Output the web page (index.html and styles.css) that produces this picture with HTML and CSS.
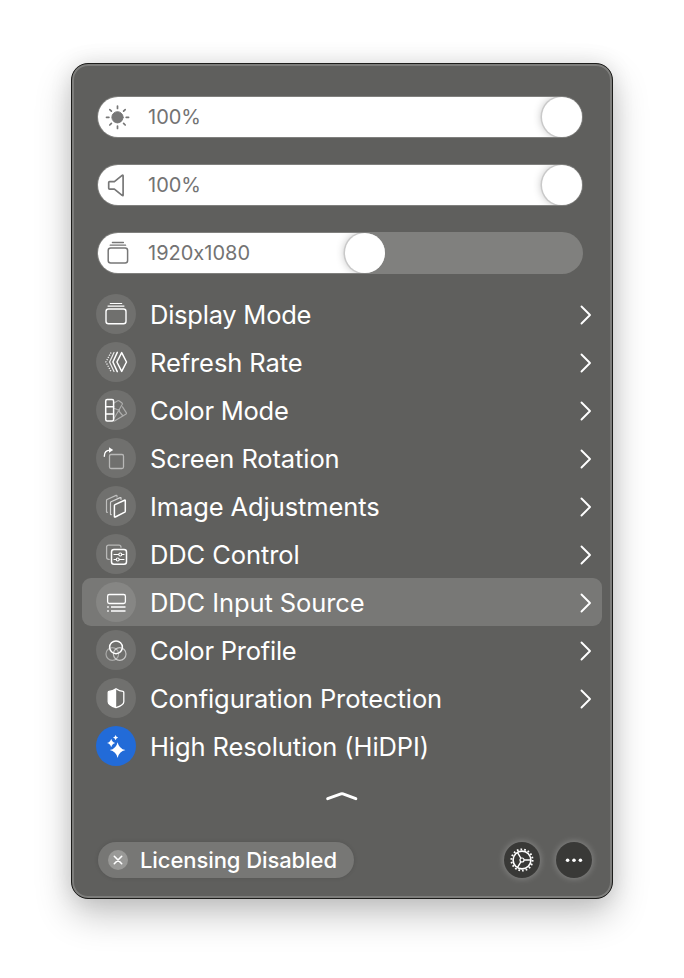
FILE: index.html
```html
<!DOCTYPE html>
<html lang="en">
<head>
<meta charset="utf-8">
<title>Display menu</title>
<link rel="stylesheet" href="styles.css">
</head>
<body>
<main class="panel">
  <section class="sliders">
    <div class="track"><div class="fill">
      <svg class="glyph" viewBox="0 0 40 40"><circle cx="19.5" cy="20.3" r="5.6" fill="currentColor"/><path d="M19.5 9.100v2.400M19.500 29v2.400M8.500 20.300h2.400M28.200 20.300h2.400M11.800 12.600l1.600 1.600M25.600 26.400l1.600 1.600M27.200 12.600l-1.600 1.600M13.400 26.400l-1.600 1.600" stroke-width="1.700"/></svg>
      <span class="value">100%</span><i class="knob"></i></div></div>
    <div class="track"><div class="fill">
      <svg class="glyph" viewBox="0 0 40 40"><path d="M11.600 16.600h4.800l7.700-6.200q1-.7 1 .5v19q0 1.200-1 .5l-7.700-6.200h-4.800q-.9 0-.9-.9v-5.800q0-.9.900-.9z" stroke-width="1.700"/></svg>
      <span class="value">100%</span><i class="knob"></i></div></div>
    <div class="track"><div class="fill partial">
      <svg class="glyph" viewBox="0 0 40 40"><rect x="10.200" y="15" width="19.400" height="15" rx="2.500" stroke-width="1.500"/><path d="M12.200 12.200h15.400M14.400 9.500h11" stroke-width="1.300"/></svg>
      <span class="value">1920x1080</span><i class="knob"></i></div></div>
  </section>

  <nav class="menu">
    <div class="row"><svg class="icon" viewBox="0 0 40 40"><rect x="10" y="15" width="20" height="14.700" rx="2.500" stroke-width="1.400"/><path d="M12 12.100h16M14.300 9.500h11.400" stroke-width="1.200"/></svg><span class="label tight">Display Mode</span><svg class="go" viewBox="0 0 12 20"><path d="M1.500 1.500 10 10l-8.500 8.500"/></svg></div>
    <div class="row"><svg class="icon" viewBox="0 0 40 40"><path d="M25.700 10.600 30.500 20l-4.800 9.400L20.900 20z" stroke-width="1.500"/><path d="M21.300 10.400 16.900 20l4.400 9.600" stroke-width="1.500"/><path d="M18 10.500 13.600 20l4.400 9.500" stroke-width="1.200" opacity=".85"/><path d="M15 10.500 9.900 20l5.100 9.500" stroke-width="1.400" stroke-dasharray="1.200 1.300" stroke-linecap="butt" opacity=".85"/></svg><span class="label">Refresh Rate</span><svg class="go" viewBox="0 0 12 20"><path d="M1.500 1.500 10 10l-8.500 8.500"/></svg></div>
    <div class="row"><svg class="icon" viewBox="0 0 40 40"><g opacity=".42" stroke-width="1.200"><path d="M18 13 21.800 10.800q.8-.4 1.500.1l2.700 2q.7.500.3 1.300L18 28.500M18 18.200l5.500 2.300M26.500 16.800l3.900 6q.4.700-.3 1.200L18.500 31M23.300 21.500l3.700 4.500"/></g><rect x="9.700" y="9.600" width="7.900" height="21.500" rx="1.500" stroke-width="1.500"/><path d="M9.700 16.700h7.900M9.700 24h7.900" stroke-width="1.400"/></svg><span class="label tight">Color Mode</span><svg class="go" viewBox="0 0 12 20"><path d="M1.500 1.500 10 10l-8.500 8.500"/></svg></div>
    <div class="row"><svg class="icon" viewBox="0 0 40 40"><rect x="13.500" y="16.500" width="14" height="14" rx="1.500" stroke-width="1.300" opacity=".5"/><path d="M8.300 18.200q.1-5.900 5.500-6.100" stroke-width="1.400"/><path class="solid" d="M13 9.200 17.200 12.100 13 14.800z"/></svg><span class="label">Screen Rotation</span><svg class="go" viewBox="0 0 12 20"><path d="M1.500 1.500 10 10l-8.500 8.500"/></svg></div>
    <div class="row"><svg class="icon" viewBox="0 0 40 40"><path d="M11.500 26.300q-1 .4-1-.6V14.500q0-.7.600-1l9-4.100q.9-.3.900.7v.8" stroke-width="1.200" opacity=".55"/><path d="M15.300 28.600q-.8.300-.8-.7V16.800q0-.7.600-1l9-4.200q.9-.4.900.7v1" stroke-width="1.200" opacity=".7"/><path d="m19 18.600 9.500-4.400q.8-.3.800.6v10.400q0 .6-.5.900l-9.500 4.900q-.9.400-.9-.6V19.500q0-.6.600-.9z" stroke-width="1.500"/></svg><span class="label">Image Adjustments</span><svg class="go" viewBox="0 0 12 20"><path d="M1.500 1.500 10 10l-8.500 8.500"/></svg></div>
    <div class="row"><svg class="icon" viewBox="0 0 40 40"><path d="M13.300 25.300h-.6q-2.100 0-2.100-2.100V13.300q0-2.100 2.100-2.100h10.200q2.100 0 2.100 2.100" stroke-width="1.300" opacity=".5"/><rect x="15.500" y="15.500" width="15" height="14.800" rx="2.500" stroke-width="1.500"/><path d="M18 20.500h4.500M26 20.500h2M18 25.500h2M23.500 25.500H28" stroke-width="1.200"/><circle cx="24.300" cy="20.500" r="1.500" stroke-width="1.100"/><circle cx="21.700" cy="25.500" r="1.500" stroke-width="1.100"/></svg><span class="label">DDC Control</span><svg class="go" viewBox="0 0 12 20"><path d="M1.500 1.500 10 10l-8.500 8.500"/></svg></div>
    <div class="row selected"><svg class="icon" viewBox="0 0 40 40"><rect x="11.600" y="12.500" width="17.800" height="9" rx="1.800" stroke-width="1.300"/><path d="M11.200 25h1.600M15 25h14.500M11.200 29h1.600M15 29h14.500" stroke-width="1.400" stroke-linecap="butt"/></svg><span class="label">DDC Input Source</span><svg class="go" viewBox="0 0 12 20"><path d="M1.500 1.500 10 10l-8.500 8.500"/></svg></div>
    <div class="row"><svg class="icon" viewBox="0 0 40 40"><circle cx="16.300" cy="24" r="6.300" opacity=".4" stroke-width="1.200"/><circle cx="23.700" cy="24" r="6.300" opacity=".6" stroke-width="1.200"/><circle cx="20" cy="17.300" r="6.400" stroke-width="1.500"/></svg><span class="label tight">Color Profile</span><svg class="go" viewBox="0 0 12 20"><path d="M1.500 1.500 10 10l-8.500 8.500"/></svg></div>
    <div class="row"><svg class="icon" viewBox="0 0 40 40"><path d="M20 10.700q3.400 2.300 7 2.700.8.100.8 1v9.300q0 3.500-7.800 5.900-7.800-2.400-7.800-5.900v-9.300q0-.9.800-1 3.600-.4 7-2.700z" stroke-width="1.300"/><path class="solid" d="M20.200 10.700q-3.600 2.300-7.200 2.700-.8.100-.8 1v9.300q0 3.500 8 5.900z"/></svg><span class="label">Configuration Protection</span><svg class="go" viewBox="0 0 12 20"><path d="M1.500 1.500 10 10l-8.500 8.500"/></svg></div>
    <div class="row"><svg class="icon on" viewBox="0 0 40 40"><path class="solid" d="M21.600 16.200q1.400 6.500 7.900 7.900-6.500 1.400-7.900 7.900-1.400-6.500-7.900-7.900 6.500-1.400 7.900-7.900zM15.200 12.800q.8 3.400 4.200 4.200-3.400.8-4.200 4.200-.8-3.400-4.200-4.200 3.400-.8 4.200-4.200zM19.600 9q.5 2.100 2.600 2.600-2.100.5-2.600 2.600-.5-2.100-2.600-2.600 2.100-.5 2.600-2.600z"/></svg><span class="label">High Resolution (HiDPI)</span></div>
  </nav>

  <svg class="collapse" viewBox="0 0 34 12"><path d="m2.700 8.700 13.300-4.800q1-.3 2 0l12.800 4.800"/></svg>

  <footer class="footer">
    <div class="license"><svg class="close" viewBox="0 0 20 20"><path d="m6.300 6.300 7.400 7.400m0-7.400-7.400 7.400"/></svg><span>Licensing Disabled</span></div>
    <div class="actions">
      <svg class="round" viewBox="0 0 36 36"><circle cx="18" cy="18" r="8.900" stroke-width="1.600"/><circle cx="18" cy="18" r="10.600" stroke-width="1.900" stroke-dasharray="1.700 2"/><circle cx="18" cy="18" r="2" stroke-width="1.200"/><path d="M20 18h6.800M17 16.300l-3.600-6M17 19.700l-3.600 6" stroke-width="1.400"/></svg>
      <svg class="round" viewBox="0 0 36 36"><g class="solid"><circle cx="11.600" cy="18.200" r="1.800"/><circle cx="18" cy="18.200" r="1.800"/><circle cx="24.400" cy="18.200" r="1.800"/></g></svg>
    </div>
  </footer>
</main>
</body>
</html>
```
FILE: styles.css
```css
* { box-sizing: border-box; }
body {
  margin: 0;
  height: 978px;
  padding: 63px 71px 0;
  background: #fff;
  font-family: Inter, "Liberation Sans", sans-serif;
  font-feature-settings: "calt" 0;
  overflow: hidden;
}
svg { display: block; flex: none; fill: none; stroke: currentColor; stroke-linecap: round; stroke-linejoin: round; }
.solid { fill: currentColor; stroke: none; }
.panel {
  width: 542px;
  height: 836px;
  border: 1px solid #1d1d1b;
  border-radius: 17px;
  padding: 32px 10px 0;
  background: #5f5f5d;
  box-shadow: inset 0 0 0 2px #7d7d7b, 0 16px 36px rgba(0,0,0,.23), 0 0 22px rgba(0,0,0,.1);
  color: #fff;
}
.sliders { display: flex; flex-direction: column; gap: 26px; padding: 0 19px 0 15px; }
.track { height: 42px; padding: 1px; border-radius: 21px; background: #80807e; }
.fill {
  display: flex;
  align-items: center;
  height: 40px;
  border-radius: 20px;
  background: #fff;
  color: #777;
  overflow: hidden;
}
.partial { width: 287px; }
.glyph { width: 40px; height: 40px; }
.value { margin-left: 10px; font-size: 20px; line-height: 40px; color: #737373; }
.knob {
  width: 40px; height: 40px;
  margin-left: auto;
  border-radius: 50%;
  background: #fff;
  box-shadow: 0 0 0 1.5px #c9c9c9, 0 0 10px rgba(0,0,0,.3);
}
.menu { padding-top: 16px; }
.row { display: flex; align-items: center; height: 48px; padding: 0 10px 0 14px; border-radius: 9px; }
.selected { background: #787876; }
.icon { width: 40px; height: 40px; border-radius: 50%; background: #70706e; }
.selected .icon { background: #868684; }
.icon.on { background: #226bd8; }
.label { margin-left: 14px; font-size: 25.5px; letter-spacing: -.1px; line-height: 48px; white-space: nowrap; position: relative; top: 1px; }
.label.tight { letter-spacing: -.24px; }
.go { width: 12px; height: 20px; margin-left: auto; position: relative; top: .5px; left: -.5px; stroke-width: 1.9; }
.collapse { width: 34px; height: 12px; margin: 20px auto 0 243px; stroke-width: 3; }
.footer { display: flex; justify-content: space-between; align-items: center; height: 36px; margin-top: 40px; padding: 0 10px 0 16px; }
.license {
  display: flex; align-items: center;
  width: 256px; height: 36px;
  padding-left: 10px;
  border-radius: 18px;
  background: #777775;
  box-shadow: 0 0 4px rgba(0,0,0,.12);
  font-size: 22px; font-weight: 500; letter-spacing: -.08px; white-space: nowrap;
}
.license span { margin-left: 12px; }
.close { width: 20px; height: 20px; border-radius: 50%; background: #999997; stroke-width: 1.6; }
.actions { display: flex; gap: 16px; }
.round { width: 36px; height: 36px; border-radius: 50%; background: #393937; box-shadow: 0 0 7px rgba(255,255,255,.3); stroke-linecap: butt; }
```
